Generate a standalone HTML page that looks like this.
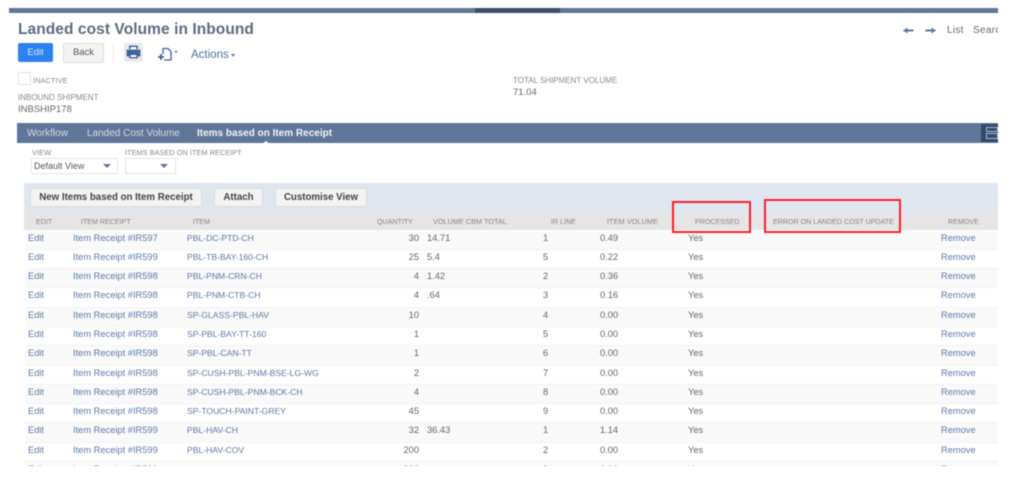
<!DOCTYPE html>
<html><head><meta charset="utf-8"><title>Landed cost Volume in Inbound</title>
<style>
html,body{margin:0;padding:0;background:#fff;width:1024px;height:485px;overflow:hidden}
body{font-family:"Liberation Sans",sans-serif;font-size:9px;color:#666}
#p{position:absolute;left:0;top:0;width:1024px;height:485px;overflow:hidden;filter:blur(.6px)}
.a{position:absolute;white-space:nowrap}
.l{color:#888;font-size:8px}
.h{position:absolute;top:217px;color:#858585;font-size:7.1px;line-height:10px;white-space:nowrap}
#rows{position:absolute;left:25px;top:230.500px;width:973px;height:235.500px;overflow:hidden}
.r{position:relative;height:19.3px;line-height:15px;box-sizing:border-box;border-bottom:1px solid #f3f3f3;font-size:9.3px;background:#fff}
.r:nth-child(odd){background:#f9f9f9}
.r span{position:absolute;top:0;white-space:nowrap}
.k{color:#5c7aa6}
.c1{left:3px}.c2{left:48px}.c3{left:162px;font-size:8.600px}.c4{right:579px}.c5{left:402px}.c6{left:518px}.c7{left:575px}.c8{left:663px}.c9{left:916px}
.btn{position:absolute;box-sizing:border-box;background:#f3f3f3;border:1px solid #ddd;border-radius:2px;color:#444;font-weight:bold;text-align:center;font-size:9.700px}
.sel{position:absolute;box-sizing:border-box;height:16px;top:158px;border:1px solid #e4e4e4;font-size:9px;line-height:14px;padding-left:2px;color:#555}
.tri{position:absolute;width:0;height:0;border-left:4px solid transparent;border-right:4px solid transparent;border-top:4px solid #5f7699;top:5px}
.red{position:absolute;box-sizing:border-box;border:2px solid #f5222d}
</style></head><body><div id="p">
<div class="a" style="left:9px;top:8px;width:989px;height:5px;background:#5f7699"></div>
<div class="a" style="left:475px;top:8px;width:85px;height:5px;background:#3f4d68"></div>

<div class="a" style="left:18px;top:21px;font-size:15.500px;line-height:18px;font-weight:bold;color:#5d6a80;letter-spacing:.07px">Landed cost Volume in Inbound</div>

<div class="a" style="left:18px;top:43px;width:35px;height:19px;background:#2b82ee;border-radius:2px;color:#d8e8fc;font-size:9.500px;line-height:19px;text-align:center">Edit</div>
<div class="btn" style="left:63px;top:43px;width:41px;height:20px;line-height:18px;font-weight:normal;color:#555;font-size:9.500px">Back</div>
<div class="a" style="left:113px;top:44px;width:1px;height:17px;background:#e6e6e6"></div>
<div class="a" style="left:124px;top:43px;width:19px;height:19px;background:#e9e9e9;border-radius:2px"></div>
<svg class="a" style="left:126px;top:45px" width="15" height="14" viewBox="0 0 15 14"><path d="M3.500 4V1h8v3M1 5h13v6h-2.500V9h-8v2H1zM3.500 9h8v4h-8z" fill="#3f639b" stroke="#3f639b" stroke-width=".8"/><rect x="4.700" y="2" width="5.600" height="2" fill="#fff"/><rect x="4.700" y="10" width="5.600" height="2" fill="#fff"/></svg>
<svg class="a" style="left:157px;top:47px" width="24" height="15" viewBox="0 0 24 15"><path d="M6 7V1.500h5l3 3V13H7" fill="none" stroke="#3f639b" stroke-width="1.300"/><path d="M1 10h6M4 7v6" stroke="#3f639b" stroke-width="1.800"/><path d="M17 4h4l-2 2z" fill="#5f7699"/></svg>
<div class="a k" style="left:191px;top:49px;font-size:11.500px;line-height:13px;color:#50709f">Actions</div>
<div class="a" style="left:231px;top:54px;width:0;height:0;border-left:2.500px solid transparent;border-right:2.500px solid transparent;border-top:3px solid #5f7699"></div>

<svg class="a" style="left:903px;top:26px" width="11" height="9" viewBox="0 0 11 9"><path d="M.5 4.500h10" fill="none" stroke="#5f7699" stroke-width="2"/><path d="M4.500 1.500L.5 4.500l4 3z" fill="#5f7699"/></svg>
<svg class="a" style="left:925px;top:26px" width="11" height="9" viewBox="0 0 11 9"><path d="M.5 4.500h10" fill="none" stroke="#5f7699" stroke-width="2"/><path d="M6.500 1.500l4 3-4 3z" fill="#5f7699"/></svg>
<div class="a" style="left:947px;top:25px;font-size:10px;line-height:12px;color:#666;letter-spacing:.3px">List</div>
<div class="a" style="left:973px;top:25px;width:25px;overflow:hidden;font-size:10px;line-height:12px;color:#666;letter-spacing:.3px">Search</div>

<div class="a" style="left:18px;top:72px;width:11px;height:11px;border:1px solid #e2e2e2"></div>
<div class="a l" style="left:33px;top:76px;line-height:10px;font-size:7.500px">INACTIVE</div>
<div class="a l" style="left:18px;top:93px;line-height:10px">INBOUND SHIPMENT</div>
<div class="a" style="left:18px;top:104px;font-size:9.500px;line-height:12px">INBSHIP178</div>
<div class="a l" style="left:513px;top:76px;line-height:10px">TOTAL SHIPMENT VOLUME</div>
<div class="a" style="left:513px;top:87px;font-size:9.500px;line-height:12px">71.04</div>

<div class="a" style="left:17px;top:123px;width:981px;height:20px;background:#5f7699"></div>
<div class="a" style="left:27px;top:127px;font-size:10px;line-height:13px;color:#d4dbe6">Workflow</div>
<div class="a" style="left:87px;top:127px;font-size:10px;line-height:13px;color:#d4dbe6">Landed Cost Volume</div>
<div class="a" style="left:197px;top:127px;font-size:10px;line-height:13px;font-weight:bold;color:#f2f4f8">Items based on Item Receipt</div>
<div class="a" style="left:262px;top:141px;width:0;height:0;border-left:4px solid transparent;border-right:4px solid transparent;border-bottom:3px solid #fff"></div>
<div class="a" style="left:981px;top:124px;width:17px;height:18px;background:#334a6e"></div>
<div class="a" style="left:986px;top:127px;width:12px;height:5px;border:1px solid #a9b6c9;box-sizing:border-box"></div>
<div class="a" style="left:986px;top:133px;width:12px;height:6px;border:1px solid #a9b6c9;box-sizing:border-box"></div>

<div class="a l" style="left:32px;top:148px;line-height:10px;font-size:7.500px">VIEW</div>
<div class="a l" style="left:125px;top:148px;line-height:10px;font-size:7.400px">ITEMS BASED ON ITEM RECEIPT</div>
<div class="sel" style="left:31px;width:87px">Default View<i class="tri" style="right:6px"></i></div>
<div class="sel" style="left:125px;width:51px"><i class="tri" style="right:7px"></i></div>

<div class="a" style="left:24px;top:183px;width:974px;height:28px;background:#dfe6f0"></div>
<div class="btn" style="left:30px;top:188px;width:172px;height:19px;line-height:18px">New Items based on Item Receipt</div>
<div class="btn" style="left:214px;top:188px;width:49px;height:19px;line-height:18px">Attach</div>
<div class="btn" style="left:275px;top:188px;width:92px;height:19px;line-height:18px">Customise View</div>

<div class="a" style="left:24px;top:211px;width:974px;height:19px;background:#e5e5e5"></div>
<div class="h" style="left:36px">EDIT</div>
<div class="h" style="left:81px">ITEM RECEIPT</div>
<div class="h" style="left:193px">ITEM</div>
<div class="h" style="left:377px">QUANTITY</div>
<div class="h" style="left:433px;font-size:7.300px">VOLUME CBM TOTAL</div>
<div class="h" style="left:551px">IR LINE</div>
<div class="h" style="left:607px;font-size:7.400px">ITEM VOLUME</div>
<div class="h" style="left:695px">PROCESSED</div>
<div class="h" style="left:773px">ERROR ON LANDED COST UPDATE</div>
<div class="h" style="left:948px">REMOVE</div>

<div id="rows">
<div class="r"><span class="c1 k">Edit</span><span class="c2 k">Item Receipt #IR597</span><span class="c3 k">PBL-DC-PTD-CH</span><span class="c4">30</span><span class="c5">14.71</span><span class="c6">1</span><span class="c7">0.49</span><span class="c8">Yes</span><span class="c9 k">Remove</span></div>
<div class="r"><span class="c1 k">Edit</span><span class="c2 k">Item Receipt #IR599</span><span class="c3 k">PBL-TB-BAY-160-CH</span><span class="c4">25</span><span class="c5">5.4</span><span class="c6">5</span><span class="c7">0.22</span><span class="c8">Yes</span><span class="c9 k">Remove</span></div>
<div class="r"><span class="c1 k">Edit</span><span class="c2 k">Item Receipt #IR598</span><span class="c3 k">PBL-PNM-CRN-CH</span><span class="c4">4</span><span class="c5">1.42</span><span class="c6">2</span><span class="c7">0.36</span><span class="c8">Yes</span><span class="c9 k">Remove</span></div>
<div class="r"><span class="c1 k">Edit</span><span class="c2 k">Item Receipt #IR598</span><span class="c3 k">PBL-PNM-CTB-CH</span><span class="c4">4</span><span class="c5">.64</span><span class="c6">3</span><span class="c7">0.16</span><span class="c8">Yes</span><span class="c9 k">Remove</span></div>
<div class="r"><span class="c1 k">Edit</span><span class="c2 k">Item Receipt #IR598</span><span class="c3 k">SP-GLASS-PBL-HAV</span><span class="c4">10</span><span class="c6">4</span><span class="c7">0.00</span><span class="c8">Yes</span><span class="c9 k">Remove</span></div>
<div class="r"><span class="c1 k">Edit</span><span class="c2 k">Item Receipt #IR598</span><span class="c3 k">SP-PBL-BAY-TT-160</span><span class="c4">1</span><span class="c6">5</span><span class="c7">0.00</span><span class="c8">Yes</span><span class="c9 k">Remove</span></div>
<div class="r"><span class="c1 k">Edit</span><span class="c2 k">Item Receipt #IR598</span><span class="c3 k">SP-PBL-CAN-TT</span><span class="c4">1</span><span class="c6">6</span><span class="c7">0.00</span><span class="c8">Yes</span><span class="c9 k">Remove</span></div>
<div class="r"><span class="c1 k">Edit</span><span class="c2 k">Item Receipt #IR598</span><span class="c3 k">SP-CUSH-PBL-PNM-BSE-LG-WG</span><span class="c4">2</span><span class="c6">7</span><span class="c7">0.00</span><span class="c8">Yes</span><span class="c9 k">Remove</span></div>
<div class="r"><span class="c1 k">Edit</span><span class="c2 k">Item Receipt #IR598</span><span class="c3 k">SP-CUSH-PBL-PNM-BCK-CH</span><span class="c4">4</span><span class="c6">8</span><span class="c7">0.00</span><span class="c8">Yes</span><span class="c9 k">Remove</span></div>
<div class="r"><span class="c1 k">Edit</span><span class="c2 k">Item Receipt #IR598</span><span class="c3 k">SP-TOUCH-PAINT-GREY</span><span class="c4">45</span><span class="c6">9</span><span class="c7">0.00</span><span class="c8">Yes</span><span class="c9 k">Remove</span></div>
<div class="r"><span class="c1 k">Edit</span><span class="c2 k">Item Receipt #IR599</span><span class="c3 k">PBL-HAV-CH</span><span class="c4">32</span><span class="c5">36.43</span><span class="c6">1</span><span class="c7">1.14</span><span class="c8">Yes</span><span class="c9 k">Remove</span></div>
<div class="r"><span class="c1 k">Edit</span><span class="c2 k">Item Receipt #IR599</span><span class="c3 k">PBL-HAV-COV</span><span class="c4">200</span><span class="c6">2</span><span class="c7">0.00</span><span class="c8">Yes</span><span class="c9 k">Remove</span></div>
<div class="r"><span class="c1 k">Edit</span><span class="c2 k">Item Receipt #IR599</span><span class="c3 k">PBL-HAV-BOLLET</span><span class="c4">200</span><span class="c6">3</span><span class="c7">0.00</span><span class="c8">Yes</span><span class="c9 k">Remove</span></div>
</div>

<div class="red" style="left:672px;top:201px;width:79px;height:32px"></div>
<div class="red" style="left:764px;top:199px;width:137px;height:34px"></div>
</div></body></html>
